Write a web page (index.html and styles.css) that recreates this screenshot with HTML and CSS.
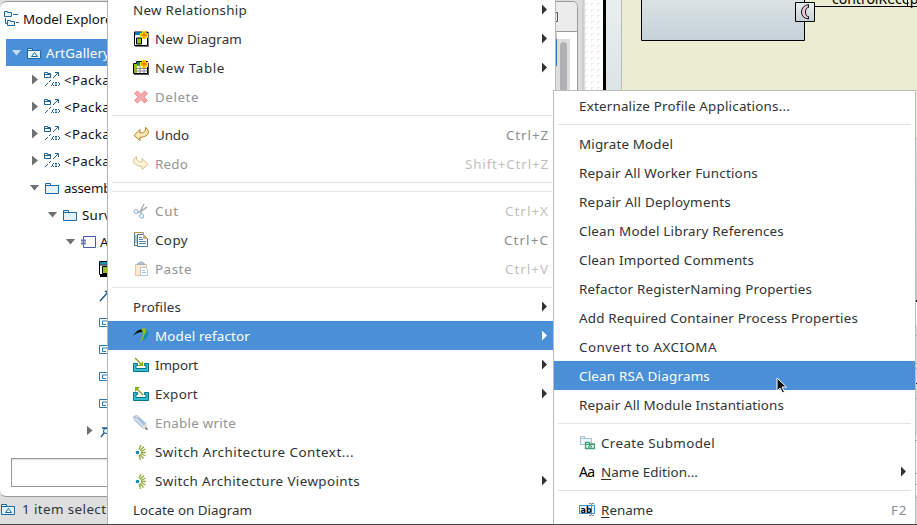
FILE: index.html
```html
<!DOCTYPE html>
<html lang="en">
<head>
<meta charset="utf-8">
<title>Model Explorer</title>
<link rel="stylesheet" href="styles.css">
</head>
<body>
<svg class="defs" width="0" height="0" aria-hidden="true">
  <defs>
    <symbol id="folder" viewBox="0 0 16 16"><path d="M1.5 13.5v-10h5v2h8v8z" fill="#e4f3fb" stroke="#1c69a6"/><path d="M1.5 5.500h13" stroke="#1c69a6"/></symbol>
    <symbol id="model" viewBox="0 0 16 16"><path d="M1.500 13.500v-10h5v2h8v8z" fill="#e4f3fb" stroke="#1c69a6"/><path d="M1.500 5.500h13M5.500 11.500l3-4 3 4z" stroke="#1c69a6" fill="none"/></symbol>
    <symbol id="import-pkg" viewBox="0 0 16 16"><g fill="none" stroke="#1c6299"><path d="M.5 5.500v-5h3v1h3v4zM0 2.500h6M11 .5h3.500V4M14 1L9 6M7 8l-2 2M4 11l-3 3M7 13.500h1"/><path d="M10 10l-2 2 2 2M14 10l2 2-2 2M11 10.500h2M12 10v4M11 13.500h2"/></g></symbol>
    <symbol id="component" viewBox="0 0 16 16"><path d="M3.500 2.500h12v11h-12z" fill="#fff" stroke="#4b55b0"/><path d="M1 6.500h5M1 9.500h5" stroke="#6670bd" stroke-width="2"/></symbol>
    <symbol id="diagram" viewBox="0 0 16 16"><path d="M1 2h15v14H1z" fill="#000"/><path d="M.5 .5h15v13H.5z" fill="#fff" stroke="#000"/><path d="M1 1h15v2.500H1z" fill="#0794ad"/><path d="M0 4h16" stroke="#000"/><path d="M3.500 5.500h5v7h-5z" fill="#91c40a" stroke="#000"/></symbol>
    <symbol id="port" viewBox="0 0 16 16"><path d="M12 1.500H.5v8H9M9 4H3.500v3.500H7" fill="none" stroke="#2f77ad"/><path d="M8 7h2v3H8z" fill="#b51642"/></symbol>
    <symbol id="line" viewBox="0 0 16 16"><path d="M1 13l9-10M6 3.500h4" stroke="#12558e" fill="none" stroke-width="1.300"/></symbol>
    <symbol id="assoc" viewBox="0 0 16 16"><path d="M2 14l3-4M3 5h8M10 9l3 4M5 10l2-4" stroke="#155588" fill="none" stroke-width="1.300"/><circle cx="7" cy="8" r="2.500" fill="#dff" stroke="#155588"/></symbol>
    <symbol id="plus" viewBox="0 0 16 16"><path d="M9 0h4v2h2v5h-2v1H9V6H7V2h2z" fill="#ffdc00"/><path d="M11 1v6M8 4h6" stroke="#f47800" stroke-width="1.300"/></symbol>
    <symbol id="new-diagram" viewBox="0 0 16 16"><path d="M2 1h14v15H2z" fill="#777"/><path d="M1.500 1h13v13.500h-13z" fill="#fff" stroke="#000"/><path d="M2 1h12v3H2z" fill="#087e9c"/><path d="M3.500 7h5v6h-5z" fill="#91c40a" stroke="#000"/><use href="#plus"/></symbol>
    <symbol id="new-table" viewBox="0 0 16 16"><path d="M1 3h15v12H1z" fill="#555"/><path d="M.5 3.500h3v-2h11v12H.5z" fill="#fff" stroke="#000"/><path d="M4 2h8v3H4z" fill="#087e9c"/><path d="M1 4h3v9H1z" fill="#91c40a"/><path d="M4 5.500h10M1 8.500h13M1 11h13M7 4v9M11 4v9" stroke="#888"/><use href="#plus"/></symbol>
    <symbol id="delete" viewBox="0 0 16 16"><path d="M4.500 2L8 5.500 11.500 2l3 2.500L11 8l3.500 3.500-3 2.500L8 10.500 4.500 14l-3-2.500L5 8 1.500 4.500z" fill="#f4aaaa" stroke="#ef8f91" stroke-linejoin="round"/></symbol>
    <symbol id="undo" viewBox="0 0 16 16"><path d="M1 8.500L7 2.500V6c3.500 0 6-1.500 5.500-5.500 5 3 4 9-5.500 10v3z" fill="#fbe9b4" stroke="#b77d20"/></symbol>
    <symbol id="cut" viewBox="0 0 16 16"><path d="M7 9l4-8M7 9l7-5M4 9l4 0 1 4" stroke="#aab4bf" stroke-width="1.600" fill="none"/><circle cx="3" cy="8.500" r="2" fill="#fff" stroke="#9dbcda" stroke-width="1.200"/><circle cx="8.500" cy="13" r="2" fill="#fff" stroke="#9dbcda" stroke-width="1.200"/></symbol>
    <symbol id="copy" viewBox="0 0 16 16"><path d="M1.500.5h9v13h-9z" fill="#e8f2f7" stroke="#b09850"/><path d="M1.500 1v12.500H5" fill="none" stroke="#527b9e"/><path d="M2 4h3M2 6h3M2 8h3M2 10h3" stroke="#6f96b5"/><path d="M4.500 2.500h6l4 4v8h-10z" fill="#f7fbfd" stroke="#4c7598"/><path d="M10 2l5 5h-5z" fill="#dbb566"/><path d="M6 5.500h3M6 7.500h4M6 9.500h7M6 11.500h7" stroke="#5986af"/></symbol>
    <symbol id="paste" viewBox="0 0 16 16"><path d="M2.500 3.500h11v11h-11z" fill="#fbead0" stroke="#e1c7a0"/><path d="M4 3.500q1-2 3-2 1-2 2 0 2 0 3 2z" fill="#b9c1d2" stroke="#a4afc4"/><path d="M7.500 6.500h5l2 2v6h-7z" fill="#fff" stroke="#b4c8d5"/><path d="M9 9.500h3M9 11.500h4" stroke="#a6bfd0"/></symbol>
    <symbol id="papyrus" viewBox="0 0 16 16"><path d="M0 8Q4 1 10 1v3Q4 4 0 8z" fill="#111"/><path d="M10 1c7 0 7 8 0 12 1-5 2-8 0-12z" fill="#168ca9"/><path d="M8 1c5-2 7 1 4 5s-1 7-5 7c3-4 4-8 1-12z" fill="#91bd17"/></symbol>
    <symbol id="tray" viewBox="0 0 16 16"><path d="M.5 6.500h4v2H3v3h10v-3h-1.500v-2h4v8H.5z" fill="#35bdd0" stroke="#08738e"/></symbol>
    <symbol id="import" viewBox="0 0 16 16"><use href="#tray"/><path d="M2 1l7 7" stroke="#8a9c16" stroke-width="1.200"/><path d="M10 4v5H5z" fill="#83b800"/></symbol>
    <symbol id="export" viewBox="0 0 16 16"><use href="#tray"/><path d="M3 2l7 7" stroke="#8a9c16" stroke-width="1.200"/><path d="M2 6V1h5z" fill="#83b800"/></symbol>
    <symbol id="pencil" viewBox="0 0 16 16"><path d="M0 2q1-2 4-2l9 8 2 7-6-2-8-8z" fill="#a7c1dd"/><path d="M3 4l8 8" stroke="#d4e2f0" stroke-width="2"/><path d="M13 8l2 7-6-2z" fill="#e8dfd4"/><path d="M13 12l2 3-3-1z" fill="#666"/><path d="M5 1L1 5" stroke="#ddd" stroke-width="1.200"/></symbol>
    <symbol id="arch" viewBox="0 0 16 16"><path d="M6 5.500L8 1M7 6.500l4-4M8 7.500l4.500-2.500M8 8.500h5M8 9.500l4.500 2.500M7 10.500l3.500 4M6 11l1.500 5" stroke="#95ae45" stroke-width="1.400"/><circle cx="4.500" cy="8.500" r="1.800" fill="#128ca8"/></symbol>
    <symbol id="submodel" viewBox="0 0 16 16"><path d="M1.500 9.500v-8h4v2h7v6z" fill="#eef7fc" stroke="#a4c0d9"/><path d="M1 3.500h11" stroke="#a4c0d9"/><path d="M6.500 13.500v-6h4v1.500h5v4.500z" fill="#e1f7e9" stroke="#43a27a" stroke-width="1.300"/><path d="M6 9.500h9M9 12l2-2 2 2z" stroke="#43a27a" fill="none"/></symbol>
    <symbol id="rename" viewBox="0 0 16 16"><path d="M.5 3.500h15v8H.5z" fill="#e6f4ff" stroke="#3d8fd0"/><path d="M10 1.500h2l.5.5.5-.5h2M10 13.500h2l.5-.5.5.5h2M12.500 2v11" stroke="#8287a0" fill="none"/></symbol>
    <symbol id="explorer" viewBox="0 0 16 16"><path d="M1.500 5.500v-5h3v1h4v4zM4.500 14.500v-5h3v1h4v4zM10 3.500h5M13 11.500h3M2.500 7v5.500H4" fill="#e8f5fb" stroke="#1c69a6"/></symbol>
  </defs>
</svg>

<div class="desktop">
  <aside class="explorer">
    <header class="tab"><svg class="icon"><use href="#explorer"/></svg><span data-w="95">Model Explorer</span></header>
    <ul class="tree">
      <li class="node root"><i class="tw open"></i><svg class="icon"><use href="#model"/></svg><span data-w="64">ArtGallery</span></li>
      <li class="node l1"><i class="tw"></i><svg class="icon"><use href="#import-pkg"/></svg><span data-w="92">&lt;Package Imp</span></li>
      <li class="node l1"><i class="tw"></i><svg class="icon"><use href="#import-pkg"/></svg><span data-w="92">&lt;Package Imp</span></li>
      <li class="node l1"><i class="tw"></i><svg class="icon"><use href="#import-pkg"/></svg><span data-w="92">&lt;Package Imp</span></li>
      <li class="node l1"><i class="tw"></i><svg class="icon"><use href="#import-pkg"/></svg><span data-w="92">&lt;Package Imp</span></li>
      <li class="node l1"><i class="tw open"></i><svg class="icon"><use href="#folder"/></svg><span data-w="57">assembly</span></li>
      <li class="node l2"><i class="tw open"></i><svg class="icon"><use href="#folder"/></svg><span data-w="79">Surveillance</span></li>
      <li class="node l3"><i class="tw open"></i><svg class="icon"><use href="#component"/></svg><span>ArtGallery</span></li>
      <li class="node l4"><i class="tw none"></i><svg class="icon"><use href="#diagram"/></svg></li>
      <li class="node l4"><i class="tw none"></i><svg class="icon"><use href="#line"/></svg></li>
      <li class="node l4 port"><i class="tw none"></i><svg class="icon"><use href="#port"/></svg></li>
      <li class="node l4 port"><i class="tw none"></i><svg class="icon"><use href="#port"/></svg></li>
      <li class="node l4 port"><i class="tw none"></i><svg class="icon"><use href="#port"/></svg></li>
      <li class="node l4 port"><i class="tw none"></i><svg class="icon"><use href="#port"/></svg></li>
      <li class="node l4"><i class="tw"></i><svg class="icon"><use href="#assoc"/></svg></li>
    </ul>
    <div class="filter"></div>
    <footer class="status"><svg class="icon"><use href="#model"/></svg><span data-w="101">1 item selected</span></footer>
  </aside>

  <svg class="canvas" width="361" height="525" viewBox="556 0 361 525">
    <defs>
      <pattern id="grid" x="585" y="3" width="6" height="6" patternUnits="userSpaceOnUse"><path d="M0 .5h3M.5 0v3" stroke="#ececec"/></pattern>
      <linearGradient id="part" x1="0" y1="0" x2="0" y2="1"><stop stop-color="#dce4e4"/><stop offset="1" stop-color="#c5d2d9"/></linearGradient>
      <linearGradient id="frame" x1="0" y1="0" x2="0" y2="1"><stop stop-color="#e9efef"/><stop offset="1" stop-color="#bccbd1"/></linearGradient>
      <linearGradient id="portfill" x1="0" y1="0" x2="0" y2="1"><stop stop-color="#e8eeee"/><stop offset="1" stop-color="#c5d2d9"/></linearGradient>
    </defs>
    <path d="M556 0h29v525h-29z" fill="#dcdcdc"/>
    <path d="M556 1.500h16q5.500 0 5.500 6V110H556z" fill="#fff" stroke="#999"/>
    <path d="M556 2h16q5 0 5 5.500V31h-21z" fill="#ececec"/>
    <path d="M556 31.500h21" stroke="#999"/><path d="M556 12.500h1.500v9H556" fill="none" stroke="#555"/>
    <path d="M556 39h14v70h-14z" fill="#dedede"/><path d="M560 109V45.500a3.500 3.500 0 0 1 7 0V109z" fill="#afb1b2"/>
    <path d="M556 39h1v27h-1z" fill="#2e74c0"/>
    <path d="M583 0v100" stroke="#bdbdbd"/>
    <path d="M585 0h332v325H585z" fill="#fff"/><path d="M585 0h332v325H585z" fill="url(#grid)"/>
    <path d="M603 0h314v302H603z" fill="#000"/><path d="M606 0h311v300H606z" fill="url(#frame)"/>
    <path d="M621.500-2h300v140.500h-300z" fill="#ececd2" stroke="#b8bbb9"/>
    <path d="M641.500-5h163v45.500h-163z" fill="url(#part)" stroke="#000"/>
    <path d="M815 6.500h102M907.500 0v6" stroke="#000"/>
    <path d="M795.500 2.500h19v19h-19z" fill="url(#portfill)" stroke="#000"/>
    <path d="M808.500 4.500v3q-3 0-3 4.500t3 4.500v2.500q-7-1-7-7t7-7.500z" fill="#efc6d1" stroke="#111"/>
    <text class="port-label" x="832" y="3.500">controlReceptacle</text>
    <path d="M915 325h2v200h-2z" fill="#d7d7d7"/><path d="M915 435h2v60h-2z" fill="#f6f6f6"/>
    <path d="M915 335.500h2M915 363.500h2M915 368.500h2M915 398.500h2M915 440.500h2M915 473.500h2M915 484.500h2M915 497.500h2" stroke="#999"/><path d="M915 383.500h2" stroke="#222"/>
  </svg>

  <nav class="menu main">
    <div class="item"><span data-w="114">New Relationship</span><i class="more"></i></div>
    <div class="item"><svg class="icon"><use href="#new-diagram"/></svg><span data-w="87">New Diagram</span><i class="more"></i></div>
    <div class="item"><svg class="icon"><use href="#new-table"/></svg><span data-w="70">New Table</span><i class="more"></i></div>
    <div class="item off"><svg class="icon"><use href="#delete"/></svg><span data-w="44">Delete</span></div>
    <hr>
    <div class="item"><svg class="icon"><use href="#undo"/></svg><span data-w="34">Undo</span><kbd data-w="43">Ctrl+Z</kbd></div>
    <div class="item off"><svg class="icon redo"><use href="#undo"/></svg><span data-w="33">Redo</span><kbd data-w="84">Shift+Ctrl+Z</kbd></div>
    <hr><hr>
    <div class="item off"><svg class="icon"><use href="#cut"/></svg><span data-w="24">Cut</span><kbd data-w="44">Ctrl+X</kbd></div>
    <div class="item"><svg class="icon"><use href="#copy"/></svg><span data-w="33">Copy</span><kbd data-w="45">Ctrl+C</kbd></div>
    <div class="item off"><svg class="icon"><use href="#paste"/></svg><span data-w="37">Paste</span><kbd data-w="44">Ctrl+V</kbd></div>
    <hr>
    <div class="item"><span data-w="48">Profiles</span><i class="more"></i></div>
    <div class="item hot"><svg class="icon"><use href="#papyrus"/></svg><span data-w="95">Model refactor</span><i class="more"></i></div>
    <div class="item"><svg class="icon"><use href="#import"/></svg><span data-w="43">Import</span><i class="more"></i></div>
    <div class="item"><svg class="icon"><use href="#export"/></svg><span data-w="43">Export</span><i class="more"></i></div>
    <div class="item off"><svg class="icon"><use href="#pencil"/></svg><span data-w="81">Enable write</span></div>
    <div class="item"><svg class="icon"><use href="#arch"/></svg><span data-w="199">Switch Architecture Context...</span></div>
    <div class="item"><svg class="icon"><use href="#arch"/></svg><span data-w="205">Switch Architecture Viewpoints</span><i class="more"></i></div>
    <div class="item"><span data-w="119">Locate on Diagram</span></div>
  </nav>

  <nav class="menu sub">
    <div class="item"><span data-w="211">Externalize Profile Applications...</span></div>
    <hr>
    <div class="item"><span data-w="94">Migrate Model</span></div>
    <div class="item"><span data-w="179">Repair All Worker Functions</span></div>
    <div class="item"><span data-w="152">Repair All Deployments</span></div>
    <div class="item"><span data-w="205">Clean Model Library References</span></div>
    <div class="item"><span data-w="175">Clean Imported Comments</span></div>
    <div class="item"><span data-w="233">Refactor RegisterNaming Properties</span></div>
    <div class="item"><span data-w="279">Add Required Container Process Properties</span></div>
    <div class="item"><span data-w="138">Convert to AXCIOMA</span></div>
    <div class="item hot"><span data-w="131">Clean RSA Diagrams</span></div>
    <div class="item"><span data-w="205">Repair All Module Instantiations</span></div>
    <hr>
    <div class="item"><svg class="icon"><use href="#submodel"/></svg><span data-w="114">Create Submodel</span></div>
    <div class="item"><b class="aa">Aa</b><span data-w="97"><u>N</u>ame Edition...</span><i class="more"></i></div>
    <hr>
    <div class="item"><svg class="icon"><use href="#rename"/><text class="ab" x="1.500" y="10.500">ab</text></svg><span data-w="52"><u>R</u>ename</span><kbd data-w="16">F2</kbd></div>
  </nav>

  <svg class="pointer" width="12" height="18" viewBox="0 0 12 18"><path d="M1 1v13l3-3 2.500 5 2-1-2.500-5h4.500z" fill="#111" stroke="#fff"/></svg>
</div>
<script src="fit.js"></script>
</body>
</html>
```
FILE: styles.css
```css
* { box-sizing: border-box; }
body { margin: 0; overflow: hidden; font: 13.4px/20px "Noto Sans", "Open Sans", sans-serif; color: #2e3436; }
.defs { position: absolute; }
.desktop { position: relative; width: 917px; height: 525px; overflow: hidden; background: #dcdcdc; }
.icon { width: 16px; height: 16px; flex: none; overflow: visible; }
span, kbd { white-space: pre; flex: none; }

.explorer { width: 120px; height: 525px; display: flex; flex-direction: column; overflow: hidden; color: #111; background: #dfdfdf; }
.tab { height: 38px; flex: none; display: flex; align-items: center; gap: 4px; padding: 0 0 3px 3px; border-top: 1px solid #999; border-top-left-radius: 7px; margin-top: 1px; background: #fff; }
.tree { list-style: none; margin: 0; padding: 0 0 0 6px; height: 419px; flex: none; background: #fff; }
.node { height: 27px; display: flex; align-items: center; font-size: 13.3px; }
.root { background: #4a90d9; color: #fff; }
.node .icon { margin-right: 4px; }
.l1 { padding-left: 18px; }
.l2 { padding-left: 36px; }
.l3 { padding-left: 54px; }
.l4 { padding-left: 72px; }
.tw { width: 20px; height: 10px; flex: none; display: flex; justify-content: center; }
.tw::before { content: ""; width: 6px; height: 10px; background: #6e7173; clip-path: polygon(0 0, 100% 50%, 0 100%); margin-left: 2px; }
.tw.open { height: 6px; }
.tw.open::before { width: 10px; height: 6px; clip-path: polygon(0 0, 100% 0, 50% 100%); margin-left: 1px; }
.root .tw::before { background: #c3dbf3; }
.tw.none::before { display: none; }
.l4 .tw { width: 21px; }
.port { padding-top: 5px; }
.filter { height: 39px; flex: none; padding-left: 11px; border-bottom: 1px solid #999; border-bottom-left-radius: 6px; background: #fff; }
.filter::before { content: ""; display: block; width: 130px; height: 27px; border: 1px solid #999; box-shadow: inset 0 1px 1px #ddd; }
.status { height: 28px; flex: none; display: flex; align-items: center; gap: 6px; padding: 0 0 4px; color: #2e3436; }

.canvas { position: absolute; left: 556px; top: 0; }
.port-label { font-size: 14px; fill: #000; }

.menu { position: absolute; display: flex; flex-direction: column; background: #fff; }
.main { left: 107px; top: -5px; width: 449px; height: 529px; border-left: 1px solid #b5b5b5; border-right: 1px solid #bbb; }
.sub { left: 553px; top: 90px; width: 363px; height: 434px; border: 1px solid #bcbdb6; border-bottom: 0; }
.desktop::after { content: ""; position: absolute; left: 0; right: 0; bottom: 0; height: 1px; background: #444; }
.item { height: 29px; flex: none; display: flex; align-items: center; gap: 6px; padding: 0 6px 0 25px; }
.main .item { padding-right: 8px; }
.item.off { color: #929595; }
.item.hot { background: #4a90d9; color: #fff; }
.menu hr { width: auto; height: 1px; flex: none; margin: 4px; border: 0; background: #e2e2e2; }
.main hr { margin-right: 3px; }
.item .more { width: 5px; height: 10px; margin-left: auto; flex: none; background: currentColor; clip-path: polygon(0 0, 100% 50%, 0 100%); }
.sub .item .more { margin-right: 3px; }
kbd { font: inherit; margin-left: auto; color: #8b8e8f; }
.main kbd { margin-right: -2px; }
.sub kbd { margin-right: 2px; }
.off kbd { color: #bfc1c1; }
.redo { transform: scaleX(-1); opacity: .5; }
.item u { text-decoration: underline; text-underline-offset: 2px; }
.aa { width: 16px; flex: none; font-weight: 400; font-size: 14px; letter-spacing: -.8px; color: #000; }
.ab { font: bold 8px "DejaVu Sans", sans-serif; fill: #000; }
.pointer { position: absolute; left: 776px; top: 377px; }
```
FILE: fit.js
```js
// Spreads each label's letters over the width given in data-w.
document.querySelectorAll('[data-w]').forEach(function (el) {
  var natural = el.getBoundingClientRect().width;
  var count = el.textContent.length;
  el.style.letterSpacing = ((Number(el.dataset.w) - natural) / count) + 'px';
});
```
